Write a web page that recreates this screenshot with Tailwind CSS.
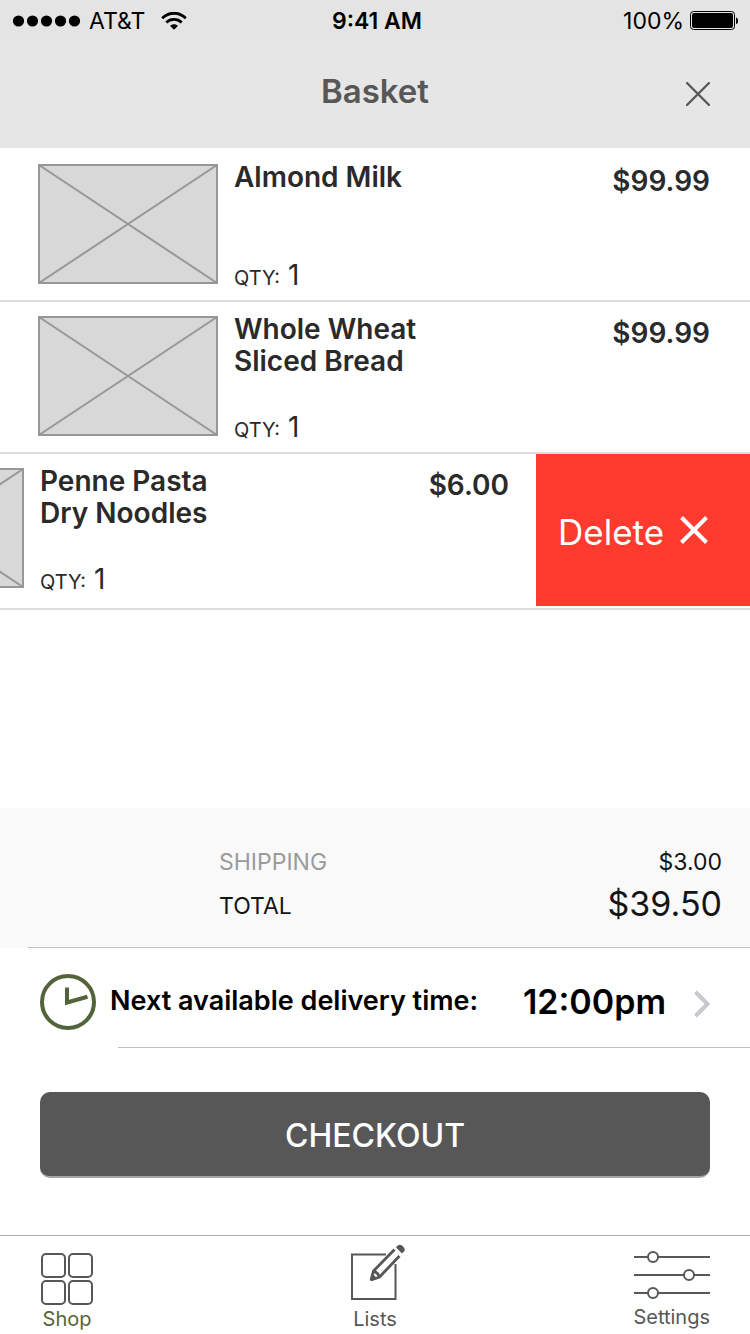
<!DOCTYPE html>
<html lang="en">
<head>
    <meta charset="UTF-8">
    <meta name="viewport" content="width=device-width, initial-scale=1.0">
    <script src="https://cdn.jsdelivr.net/npm/@tailwindcss/browser@4"></script>
    <title>Basket</title>
</head>
<body class="min-h-screen flex flex-col bg-white text-[#2a2a2a] font-['Inter','Liberation_Sans',sans-serif]">
    <!-- status bar -->
    <div class="grid grid-cols-3 items-center h-10 pt-px px-3 bg-[#e4e4e4] text-black text-[23px] leading-10">
        <div class="flex items-center">
            <svg class="w-[70px] h-3" viewBox="0 0 70 12" aria-hidden="true">
                <circle cx="6.500" cy="6" r="5.600"/><circle cx="20.500" cy="6" r="5.600"/><circle cx="34.500" cy="6" r="5.600"/><circle cx="48.500" cy="6" r="5.600"/><circle cx="62.500" cy="6" r="5.600"/>
            </svg>
            <span class="ml-[7px]">AT&amp;T</span>
            <svg class="ml-4 w-[26px] h-[18px]" viewBox="0 0 26 18" fill="none" stroke="#000" aria-hidden="true">
                <path d="M1.200 6.200C7.800-.4 18.200-.4 24.800 6.200" stroke-width="2.800"/>
                <path d="M5.300 10.500C9.600 6.400 16.400 6.400 20.700 10.500" stroke-width="2.800"/>
                <path d="M9 13.800C11.200 11.700 14.800 11.700 17 13.800L13 17.800Z" fill="#000" stroke="none"/>
            </svg>
        </div>
        <div class="text-center font-semibold pl-1">9:41 AM</div>
        <div class="flex items-center justify-end gap-[6px]">
            <span>100%</span>
            <svg class="w-12 h-5" viewBox="0 0 48 20" aria-hidden="true">
                <rect x=".5" y=".5" width="44" height="18" rx="3" fill="none" stroke="#000"/>
                <rect x="2" y="2" width="41" height="15" rx="2"/>
                <path d="M46 6.500c3 .8 3 5.700 0 6.500z"/>
            </svg>
        </div>
    </div>

    <header class="relative h-[108px] pt-[31px] bg-[#e6e6e6]">
        <h1 class="text-center text-[33px] leading-10 font-semibold text-[#575757]">Basket</h1>
        <button class="absolute right-10 top-[42px]" aria-label="Close">
            <svg class="block w-6 h-6" viewBox="0 0 24 24" stroke="#575757" stroke-width="2.300" stroke-linecap="round"><path d="M1 1l22 22M23 1L1 23"/></svg>
        </button>
    </header>

    <main class="flex-1 flex flex-col">
        <ul class="text-[28px] leading-8">
            <li class="flex h-[152px] pt-[13px] pb-[6px] pl-[38px] pr-10">
                <svg class="shrink-0 mt-[3px] w-[180px] h-[120px]" viewBox="0 0 180 120" fill="#d8d8d8" stroke="#979797" stroke-width="2"><path d="M1 1h178v118H1zL179 119M179 1L1 119"/></svg>
                <div class="flex-1 flex flex-col justify-between pl-4">
                    <h2 class="font-semibold">Almond Milk</h2>
                    <p><span class="text-[20px]">QTY:</span> 1</p>
                </div>
                <p class="mt-1 font-semibold">$99.99</p>
            </li>
            <li class="flex h-[152px] border-t-2 border-[#dcdcdc] pt-[11px] pb-[6px] pl-[38px] pr-10">
                <svg class="shrink-0 mt-[3px] w-[180px] h-[120px]" viewBox="0 0 180 120" fill="#d8d8d8" stroke="#979797" stroke-width="2"><path d="M1 1h178v118H1zL179 119M179 1L1 119"/></svg>
                <div class="flex-1 flex flex-col justify-between pl-4">
                    <h2 class="font-semibold">Whole Wheat<br>Sliced Bread</h2>
                    <p><span class="text-[20px]">QTY:</span> 1</p>
                </div>
                <p class="mt-1 font-semibold">$99.99</p>
            </li>
            <!-- swiped open -->
            <li class="flex h-[158px] border-y-2 border-[#dcdcdc] overflow-hidden">
                <div class="flex-1 flex h-[150px] -ml-[194px] pt-[11px] pb-[6px] pl-[38px] pr-[27px]">
                    <svg class="shrink-0 mt-[3px] w-[180px] h-[120px]" viewBox="0 0 180 120" fill="#d8d8d8" stroke="#979797" stroke-width="2"><path d="M1 1h178v118H1zL179 119M179 1L1 119"/></svg>
                    <div class="flex-1 flex flex-col justify-between pl-4">
                        <h2 class="font-semibold">Penne Pasta<br>Dry Noodles</h2>
                        <p><span class="text-[20px]">QTY:</span> 1</p>
                    </div>
                    <p class="mt-1 font-semibold">$6.00</p>
                </div>
                <button class="shrink-0 w-[214px] h-[152px] flex items-center pl-[22px] gap-4 bg-[#ff3b30] text-white text-[35px]">
                    <span class="pt-[3px]">Delete</span>
                    <svg class="w-7 h-7" viewBox="0 0 28 28" stroke="#fff" stroke-width="4" aria-hidden="true"><path d="M1.500 1.500l25 25M26.500 1.500l-25 25"/></svg>
                </button>
            </li>
        </ul>

        <section class="mt-auto h-[140px] bg-[#f9f9f9] flex flex-col">
            <dl class="flex-1 pt-8 pl-[219px] pr-7 text-[23px] text-[#141414]">
                <div class="flex justify-between leading-[44px]">
                    <dt class="text-[#9b9b9b]">SHIPPING</dt>
                    <dd>$3.00</dd>
                </div>
                <div class="flex justify-between">
                    <dt class="leading-[44px]">TOTAL</dt>
                    <dd class="text-[34px] leading-10">$39.50</dd>
                </div>
            </dl>
            <hr class="ml-7 border-[#c0c0c0]">
        </section>

        <a href="#" class="flex items-center h-[99px] pt-2 px-10 font-semibold text-black">
            <svg class="shrink-0 w-14 h-14" viewBox="0 0 56 56" fill="none" stroke="#54643a" stroke-width="4" aria-hidden="true"><circle cx="28" cy="28" r="26"/><path d="M27 13.500V28.500L47.500 22.800"/></svg>
            <span class="ml-[14px] flex-1 text-[27px]">Next available delivery time:</span>
            <span class="text-[34px]">12:00pm</span>
            <svg class="ml-7 mt-1 w-4 h-7" viewBox="0 0 16 28" fill="none" stroke="#c7c7cc" stroke-width="4" aria-hidden="true"><path d="M1.500 2L13.500 14 1.500 26"/></svg>
        </a>
        <hr class="ml-[118px] border-[#c0c0c0]">

        <button class="mx-10 mt-11 mb-[57px] h-[86px] pt-[3px] rounded-[10px] border-b-2 border-[#a5a5a5] bg-[#575757] text-white text-[32px] font-medium">CHECKOUT</button>
    </main>

    <nav class="grid grid-cols-3 h-[99px] px-10 border-t border-[#adadad] text-[20px] leading-6 text-[#575757]">
        <a href="#" class="justify-self-start flex flex-col items-center pt-[17px] text-[#54643a]">
            <svg class="w-[54px] h-[54px]" viewBox="0 0 54 54" fill="none" stroke="#575757" stroke-width="2" aria-hidden="true">
                <rect x="2" y="1" width="23" height="23" rx="4"/><rect x="29" y="1" width="23" height="23" rx="4"/><rect x="2" y="28" width="23" height="23" rx="4"/><rect x="29" y="28" width="23" height="23" rx="4"/>
            </svg>
            <span>Shop</span>
        </a>
        <a href="#" class="justify-self-center flex flex-col items-center pt-2">
            <svg class="ml-2 w-[55px] h-[58px] mb-[5px]" viewBox="0 0 55 58" aria-hidden="true">
                <path d="M35 10.500H1V55H44.500V20" fill="none" stroke="#575757" stroke-width="2"/>
                <path d="M20 36L22.500 27 43.500 5.500M20 36L28.500 33 48.500 12M22.500 27.500Q27 28 28 33" fill="none" stroke="#575757" stroke-width="2.800"/>
                <path d="M19 37l2.200-7.500 5.200 5.200z" fill="#575757"/>
                <path d="M45 3.500L47 1.300Q49 0 51 1.500L53 3.500Q54.500 5.500 53 7.500L51 9.500z" fill="#575757"/>
            </svg>
            <span>Lists</span>
        </a>
        <a href="#" class="justify-self-end flex flex-col items-center pt-[14px]">
            <svg class="w-[76px] h-[50px] mb-[5px]" viewBox="0 0 76 50" fill="#fff" stroke="#575757" stroke-width="2" aria-hidden="true">
                <path d="M0 7h76M0 25h76M0 43h76"/>
                <circle cx="19" cy="7" r="5"/><circle cx="55" cy="25" r="5"/><circle cx="19" cy="43" r="5"/>
            </svg>
            <span>Settings</span>
        </a>
    </nav>
</body>
</html>
